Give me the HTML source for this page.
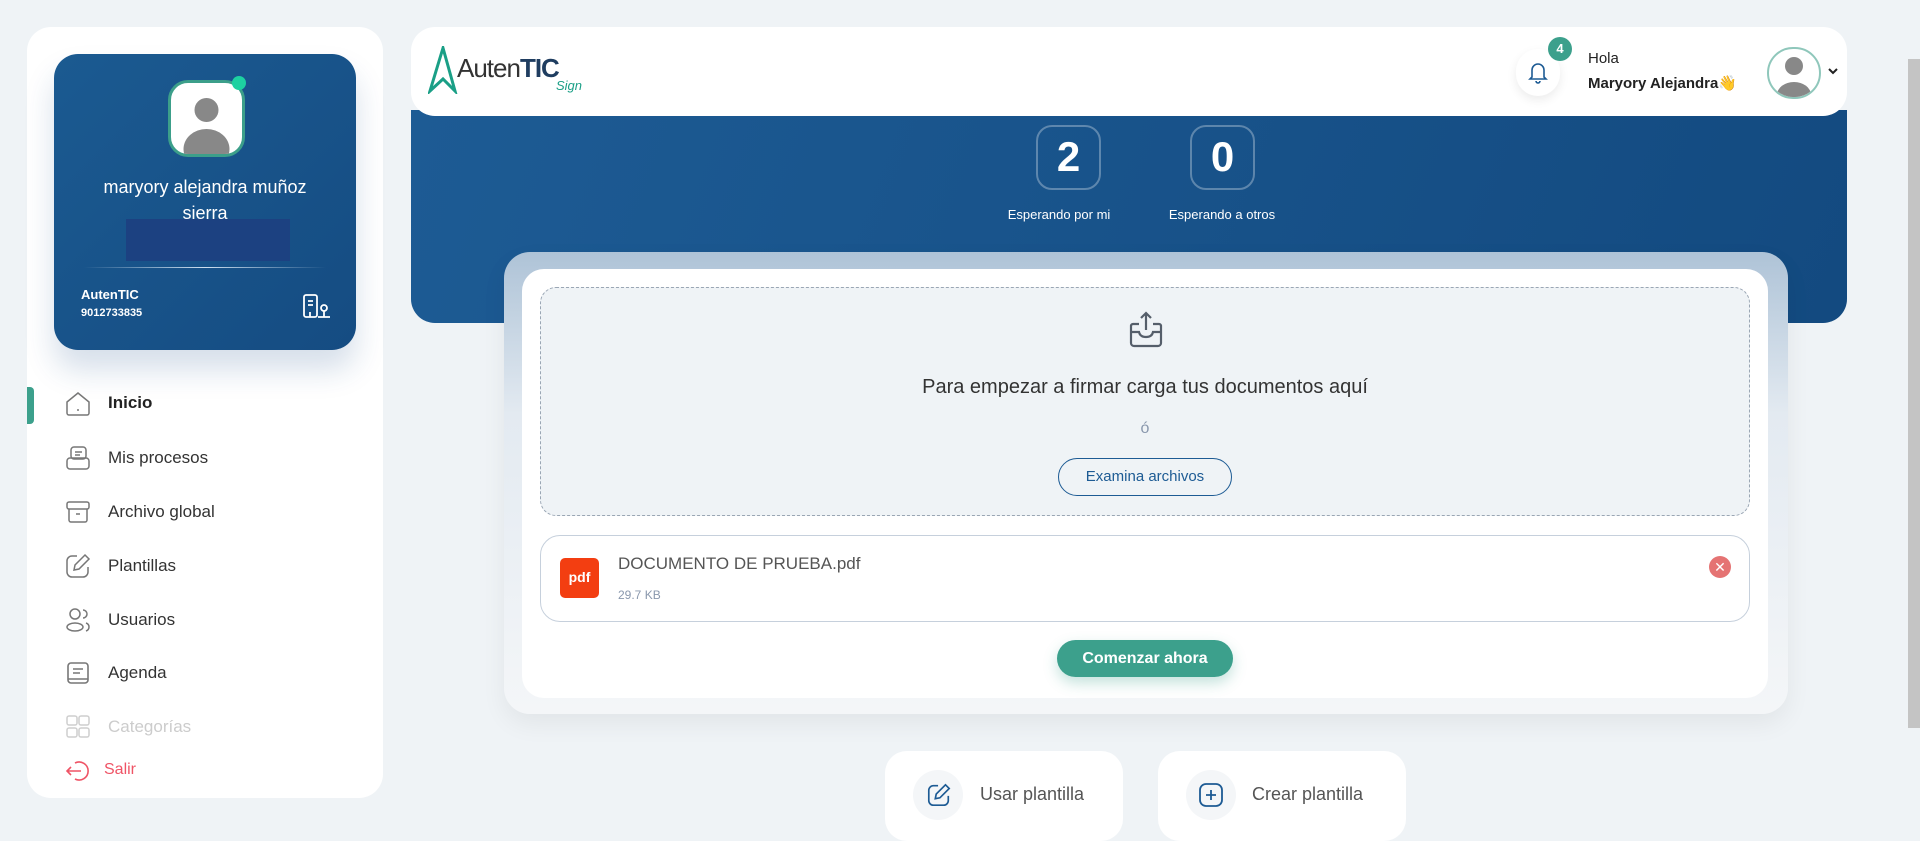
<!DOCTYPE html>
<html><head><meta charset="utf-8"><style>
*{box-sizing:border-box;margin:0;padding:0}
body{width:1920px;height:825px;overflow:hidden;background:#eff3f6;font-family:"Liberation Sans",sans-serif;position:relative;color:#222}
.abs{position:absolute}
.side{left:27px;top:27px;width:356px;height:771px;background:#fff;border-radius:24px}
.card{left:54px;top:54px;width:302px;height:296px;border-radius:24px;background:linear-gradient(135deg,#1b5a91,#154c82);box-shadow:0 20px 30px rgba(30,80,140,.18)}
.nav{left:108px;font-size:17px;color:#333}
.ico{left:64px;width:28px;height:28px}
</style></head><body>
<div class="abs side"></div>
<div class="abs card"></div>
<div class="abs" style="left:168px;top:80px;width:77px;height:77px;border-radius:20px;background:#fff;border:3px solid #3c9f8a;overflow:hidden">
<svg width="71" height="71" viewBox="0 0 71 71"><circle cx="35.5" cy="27" r="12" fill="#888"/><ellipse cx="35.5" cy="66" rx="23" ry="20" fill="#888"/></svg></div>
<div class="abs" style="left:232px;top:76px;width:14px;height:14px;border-radius:50%;background:#1dd1a1"></div>
<div class="abs" style="left:54px;width:302px;top:174px;text-align:center;color:#fff;font-size:18px;line-height:26px">maryory alejandra muñoz<br>sierra</div>
<div class="abs" style="left:126px;top:219px;width:164px;height:42px;background:#1c4181"></div>
<div class="abs" style="left:84px;top:267px;width:242px;height:1px;background:linear-gradient(90deg,transparent,#cfe0ef,transparent)"></div>
<div class="abs" style="left:81px;top:287px;color:#fff;font-size:13px;font-weight:bold">AutenTIC</div>
<div class="abs" style="left:81px;top:307px;color:#fff;font-size:11px;font-weight:bold">9012733835</div>
<svg class="abs" style="left:302px;top:293px" width="28" height="26" viewBox="0 0 28 26" fill="none" stroke="#fff" stroke-width="1.8"><rect x="2" y="2" width="13" height="22" rx="2"/><path d="M6 8h5M6 12h5M8 24v-5"/><circle cx="22" cy="15" r="3"/><path d="M22 18v6M16 24h12"/></svg>
<div class="abs" style="left:27px;top:387px;width:7px;height:37px;background:#3ca08c;border-radius:0 4px 4px 0"></div>
<svg class="abs ico" style="top:390px" viewBox="0 0 28 28" fill="none" stroke="#777" stroke-width="1.5"><path d="M3 12l11-9 11 9v11a2 2 0 0 1-2 2H5a2 2 0 0 1-2-2z"/><path d="M14 19v2"/></svg>
<div class="abs nav" style="top:393px;font-weight:bold;color:#222">Inicio</div>
<svg class="abs ico" style="top:444px" viewBox="0 0 28 28" fill="none" stroke="#777" stroke-width="1.5"><rect x="7" y="3" width="15" height="12" rx="3"/><path d="M11 8h7M11 11h5"/><rect x="3" y="14" width="22" height="11" rx="3"/></svg>
<div class="abs nav" style="top:448px">Mis procesos</div>
<svg class="abs ico" style="top:498px" viewBox="0 0 28 28" fill="none" stroke="#777" stroke-width="1.5"><rect x="3" y="4" width="22" height="7" rx="2"/><path d="M5 11v11a2 2 0 0 0 2 2h14a2 2 0 0 0 2-2V11M12 16h4"/></svg>
<div class="abs nav" style="top:502px">Archivo global</div>
<svg class="abs ico" style="top:552px" viewBox="0 0 28 28" fill="none" stroke="#777" stroke-width="1.5"><path d="M13 4H8a5 5 0 0 0-5 5v11a5 5 0 0 0 5 5h11a5 5 0 0 0 5-5v-5"/><path d="M21 3l4 4-10 10-5 1 1-5z"/></svg>
<div class="abs nav" style="top:556px">Plantillas</div>
<svg class="abs ico" style="top:606px" viewBox="0 0 28 28" fill="none" stroke="#777" stroke-width="1.5"><circle cx="11" cy="8" r="5"/><ellipse cx="11" cy="21" rx="8" ry="4"/><path d="M19 4a4 4 0 0 1 0 8M22 17q3 1 3 4t-3 4"/></svg>
<div class="abs nav" style="top:610px">Usuarios</div>
<svg class="abs ico" style="top:659px" viewBox="0 0 28 28" fill="none" stroke="#777" stroke-width="1.6"><rect x="4" y="4" width="20" height="20" rx="3"/><path d="M9 10h10M9 14h7M4 20h20"/></svg>
<div class="abs nav" style="top:663px">Agenda</div>
<svg class="abs ico" style="top:713px;opacity:.35" viewBox="0 0 28 28" fill="none" stroke="#777" stroke-width="1.5"><rect x="3" y="3" width="10" height="9" rx="2"/><rect x="15" y="3" width="10" height="9" rx="2"/><rect x="3" y="15" width="10" height="9" rx="2"/><rect x="15" y="15" width="10" height="9" rx="2"/></svg>
<div class="abs nav" style="top:717px;color:#ccc">Categorías</div>
<svg class="abs" style="left:64px;top:757px" width="28" height="28" viewBox="0 0 28 28" fill="none" stroke="#ef5466" stroke-width="1.6"><path d="M11 6a9 9 0 1 1 0 16"/><path d="M17 14H3M7 10l-4 4 4 4"/></svg>
<div class="abs" style="left:104px;top:761px;font-size:16px;color:#ef5466">Salir</div>

<div class="abs" style="left:411px;top:110px;width:1436px;height:213px;border-radius:0 0 24px 24px;background:linear-gradient(110deg,#1d5b94,#134a80)"></div>
<div class="abs" style="left:411px;top:27px;width:1436px;height:89px;background:#fff;border-radius:24px"></div>
<svg class="abs" style="left:428px;top:46px" width="30" height="48" viewBox="0 0 30 48" fill="none" stroke="#1a9f86" stroke-width="3"><path d="M15 2L2 45l13-12 12 12z"/></svg>
<div class="abs" style="left:457px;top:53px;font-size:26px;color:#333;letter-spacing:-1px">Auten<b style="color:#1f3d60">TIC</b></div>
<div class="abs" style="left:556px;top:78px;font-size:13px;color:#1a9f86;font-style:italic">Sign</div>
<div class="abs" style="left:1516px;top:49px;width:44px;height:47px;border-radius:22px;background:#fff;box-shadow:0 4px 10px rgba(0,0,0,.08)"></div>
<svg class="abs" style="left:1527px;top:60px" width="22" height="24" viewBox="0 0 22 24" fill="none" stroke="#1d5b94" stroke-width="1.6"><path d="M5 17V10a6 6 0 0 1 12 0v7l2 2H3z"/><path d="M9 21a2 2 0 0 0 4 0"/></svg>
<div class="abs" style="left:1548px;top:37px;width:24px;height:24px;border-radius:50%;background:#3ca08c;color:#fff;font-size:13px;font-weight:bold;text-align:center;line-height:24px">4</div>
<div class="abs" style="left:1588px;top:50px;font-size:15px;color:#222">Hola</div>
<div class="abs" style="left:1588px;top:74px;font-size:15px;font-weight:bold;color:#222">Maryory Alejandra👋</div>
<div class="abs" style="left:1767px;top:47px;width:54px;height:52px;border-radius:26px;background:#fff;border:2px solid #8fc7bb;overflow:hidden">
<svg width="50" height="48" viewBox="0 0 50 48"><circle cx="25" cy="17" r="9" fill="#888"/><ellipse cx="25" cy="46" rx="17" ry="13" fill="#888"/></svg></div>
<svg class="abs" style="left:1827px;top:66px" width="12" height="10" viewBox="0 0 12 10" fill="none" stroke="#222" stroke-width="2"><path d="M2 3l4 4 4-4"/></svg>

<div class="abs" style="left:1036px;top:125px;width:65px;height:65px;border-radius:16px;border:2px solid rgba(255,255,255,.3);color:#fff;font-size:42px;font-weight:bold;text-align:center;line-height:60px">2</div>
<div class="abs" style="left:1190px;top:125px;width:65px;height:65px;border-radius:16px;border:2px solid rgba(255,255,255,.3);color:#fff;font-size:42px;font-weight:bold;text-align:center;line-height:60px">0</div>
<div class="abs" style="left:979px;width:160px;top:207px;text-align:center;color:#fff;font-size:13px">Esperando por mi</div>
<div class="abs" style="left:1142px;width:160px;top:207px;text-align:center;color:#fff;font-size:13px">Esperando a otros</div>

<div class="abs" style="left:504px;top:252px;width:1284px;height:462px;border-radius:26px;background:linear-gradient(180deg,#aec3d7 0%,#e3eaf1 35%,#f4f6f8 100%);box-shadow:0 10px 25px rgba(0,0,0,.06)"></div>
<div class="abs" style="left:522px;top:269px;width:1246px;height:429px;border-radius:22px;background:#fff"></div>
<div class="abs" style="left:540px;top:287px;width:1210px;height:229px;border-radius:16px;border:1px dashed #9aa6b4;background:#eff3f6"></div>
<svg class="abs" style="left:1127px;top:310px" width="38" height="40" viewBox="0 0 38 40" fill="none" stroke="#555e6a" stroke-width="2.2"><path d="M19 20V3M14 8l5-5 5 5"/><path d="M12 14H6a2 2 0 0 0-2 2v17a3 3 0 0 0 3 3h24a3 3 0 0 0 3-3V16a2 2 0 0 0-2-2h-6"/><path d="M4 22h8q1 5 7 5t7-5h8"/></svg>
<div class="abs" style="left:540px;width:1210px;top:376px;text-align:center;font-size:20px;color:#333">Para empezar a firmar carga tus documentos aquí</div>
<div class="abs" style="left:540px;width:1210px;top:420px;text-align:center;font-size:16px;color:#8a98ad">ó</div>
<div class="abs" style="left:1058px;top:458px;width:174px;height:38px;border-radius:19px;border:1.5px solid #1d5b94;color:#1d5b94;font-size:15px;text-align:center;line-height:35px">Examina archivos</div>
<div class="abs" style="left:540px;top:535px;width:1210px;height:87px;border-radius:20px;border:1.5px solid #c6d0dc;background:#fff"></div>
<div class="abs" style="left:560px;top:558px;width:39px;height:40px;border-radius:5px;background:#f33e11;color:#fff;font-weight:bold;font-size:14px;text-align:center;line-height:38px">pdf</div>
<div class="abs" style="left:618px;top:554px;font-size:17px;color:#555">DOCUMENTO DE PRUEBA.pdf</div>
<div class="abs" style="left:618px;top:588px;font-size:12px;color:#8a98ad">29.7 KB</div>
<div class="abs" style="left:1709px;top:556px;width:22px;height:22px;border-radius:50%;background:#e57373;color:#fff;font-size:14px;text-align:center;line-height:22px">✕</div>
<div class="abs" style="left:1057px;top:640px;width:176px;height:37px;border-radius:19px;background:#3ca08c;color:#fff;font-weight:bold;font-size:16px;text-align:center;line-height:37px;box-shadow:0 6px 14px rgba(60,160,140,.3)">Comenzar ahora</div>

<div class="abs" style="left:885px;top:751px;width:238px;height:90px;border-radius:22px;background:#fff"></div>
<div class="abs" style="left:1158px;top:751px;width:248px;height:90px;border-radius:22px;background:#fff"></div>
<div class="abs" style="left:913px;top:770px;width:50px;height:50px;border-radius:50%;background:#f4f6f8"></div>
<div class="abs" style="left:1186px;top:770px;width:50px;height:50px;border-radius:50%;background:#f4f6f8"></div>
<svg class="abs" style="left:926px;top:782px" width="26" height="26" viewBox="0 0 28 28" fill="none" stroke="#1d5b94" stroke-width="1.8"><path d="M13 4H8a5 5 0 0 0-5 5v11a5 5 0 0 0 5 5h11a5 5 0 0 0 5-5v-5"/><path d="M21 3l4 4-10 10-5 1 1-5z"/></svg>
<svg class="abs" style="left:1198px;top:782px" width="26" height="26" viewBox="0 0 26 26" fill="none" stroke="#1d5b94" stroke-width="1.8"><rect x="2" y="2" width="22" height="22" rx="6"/><path d="M13 8v10M8 13h10"/></svg>
<div class="abs" style="left:980px;top:784px;font-size:18px;color:#555">Usar plantilla</div>
<div class="abs" style="left:1252px;top:784px;font-size:18px;color:#555">Crear plantilla</div>
<div class="abs" style="left:1908px;top:59px;width:12px;height:669px;background:#c4c4c4"></div>
</body></html>
